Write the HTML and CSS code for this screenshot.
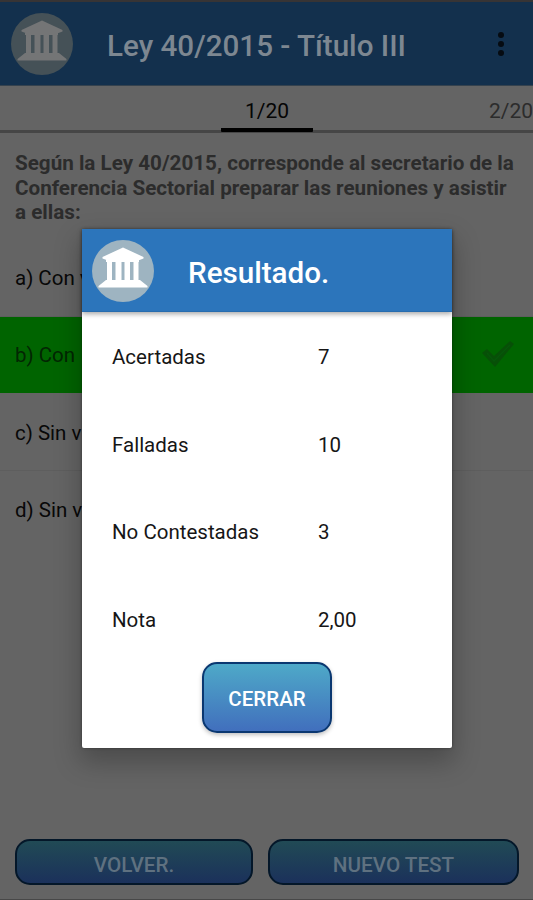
FILE: index.html
```html
<!DOCTYPE html>
<html lang="es">
<head>
<meta charset="utf-8">
<title>Ley 40/2015</title>
<link rel="stylesheet" href="styles.css">
</head>
<body>
<svg class="defs" width="0" height="0" aria-hidden="true">
  <symbol id="temple" viewBox="0 0 62 62">
    <circle class="disc" cx="31" cy="31" r="31"/>
    <path class="stone" d="M10.500 17 31 7.500 51.500 17v1.500l-4 1.500h-33l-4-1.500zM14 19.500h33v2.500H14zM15 21.500h5v19h-5zM23.500 21.500h6v19h-6zM32.500 21.500h5.500v19h-5.500zM41.500 21.500h5v19h-5zM14 40h34L55.500 46v1.500h-49V46z"/>
  </symbol>
</svg>
<div class="app">
  <div class="status"></div>
  <header class="bar">
    <svg class="logo"><use href="#temple"/></svg>
    <h1 class="bar-title">Ley 40/2015 - Título III</h1>
    <div class="more"><i></i><i></i><i></i></div>
  </header>
  <nav class="tabs">
    <span></span>
    <span class="tab active">1/20</span>
    <span class="tab next">2/20</span>
  </nav>
  <p class="question">Según la Ley 40/2015, corresponde al secretario de la<br>Conferencia Sectorial preparar las reuniones y asistir<br>a ellas:</p>
  <ul class="answers">
    <li>a) Con v</li>
    <li class="correct">b) Con
      <svg class="check" viewBox="0 0 34 28"><path d="M1 13 6 9l7 7L29 1l4 3L14 27z"/><path class="check-in" d="M6 13l7 8L29 5"/></svg>
    </li>
    <li>c) Sin v</li>
    <li>d) Sin v</li>
  </ul>
  <footer class="actions">
    <button class="btn">VOLVER.</button>
    <button class="btn">NUEVO TEST</button>
  </footer>
</div>
<section class="dialog">
  <header class="dialog-head">
    <svg class="logo"><use href="#temple"/></svg>
    <h2 class="dialog-title">Resultado.</h2>
  </header>
  <dl class="results">
    <dt>Acertadas</dt><dd>7</dd>
    <dt>Falladas</dt><dd>10</dd>
    <dt>No Contestadas</dt><dd>3</dd>
    <dt>Nota</dt><dd>2,00</dd>
  </dl>
  <button class="close">CERRAR</button>
</section>
</body>
</html>
```
FILE: styles.css
```css
* { box-sizing: border-box; margin: 0; padding: 0; }
body { --disc: #455157; --stone: #747576; width: 533px; height: 900px; overflow: hidden; position: relative; font-family: Roboto, sans-serif; font-size: 20.500px; color: #080808; background: #646464; }
.defs { position: absolute; }
.app { height: 900px; display: flex; flex-direction: column; border-bottom: 1px solid #484848; }
.status { height: 2px; background: #373435; flex: none; }
.bar { height: 84px; flex: none; background: #13304d; display: flex; align-items: center; padding-left: 11px; border-bottom: 1px solid #35424e; }
.logo { width: 62px; height: 62px; flex: none; }
.disc { fill: var(--disc); }
.stone { fill: var(--stone); }
.bar-title { margin-left: 34px; width: 386px; font-size: 29.600px; font-weight: 500; color: #7d8791; white-space: nowrap; padding-top: 4px; }
.more { display: flex; flex-direction: column; gap: 3px; padding-top: 1px; margin-left: 5px; }
.more i { width: 6px; height: 6px; border-radius: 50%; background: #060b12; }
.tabs { height: 47px; flex: none; display: grid; grid-template-columns: 221px 92px 220px; border-bottom: 3px solid #464646; }
.tab { height: 46px; line-height: 51px; text-align: center; color: #050505; border-bottom: 4px solid #000; border-radius: 1px; font-size: 21px; }
.tab.next { border: 0; text-align: right; color: #2c2c2c; }
.question { padding: 18px 0 0 15px; font-size: 20.650px; font-weight: 700; line-height: 24.500px; color: #2c2c2c; height: 107px; white-space: nowrap; }
.answers { list-style: none; flex: 1; }
.answers li { height: 77px; line-height: 77px; padding: 1px 0 0 15px; border-bottom: 1px solid #5e5e5e; display: flex; align-items: center; }
.answers li.correct { height: 76px; background: #006400; color: #032603; border: 0; justify-content: space-between; padding-right: 18px; }
.answers li:nth-child(3) { height: 78px; padding-top: 3px; }
.answers li:last-child { border: 0; }
.check { width: 34px; height: 28px; fill: #075007; margin-top: -4px; }
.check-in { fill: none; stroke: #06570a; stroke-width: 1.500; }
.actions { flex: none; display: flex; gap: 15px; padding: 0 14px 14px 15px; }
.btn { width: 238px; height: 46px; border: 2px solid #041729; border-radius: 15px; background: linear-gradient(#214a55, #1b315b); color: #5f7180; font: 500 20.700px Roboto, sans-serif; padding-top: 5px; }
.btn + .btn { width: 251px; }
.dialog { --disc: #9eb4c1; --stone: #fff; position: absolute; left: 82px; top: 229px; width: 370px; height: 519px; background: #fff; border-radius: 2px; box-shadow: 0 12px 26px 2px rgba(0,0,0,.25), 0 0 3px rgba(0,0,0,.4); display: flex; flex-direction: column; }
.dialog-head { height: 83px; flex: none; background: #2c75bb; box-shadow: 0 2px 5px rgba(0,0,0,.35); display: flex; align-items: center; padding-left: 10px; border-bottom: 1px solid #276cae; }
.dialog .logo { margin-top: 1px; }
.dialog-title { margin-left: 34px; font-size: 29.600px; font-weight: 500; color: #fff; padding-top: 6px; }
.results { display: grid; grid-template-columns: 206px 1fr; grid-auto-rows: 87.500px; padding: 0 0 0 30px; line-height: 91px; height: 350px; color: #161616; }
.close { align-self: center; width: 130px; height: 71px; border: 2px solid #0a3770; border-radius: 15px; background: linear-gradient(#4ea9c8, #416fbd); color: #fff; font: 500 20.500px Roboto, sans-serif; box-shadow: 0 2px 4px rgba(0,0,0,.25); padding-top: 3px; }
```
